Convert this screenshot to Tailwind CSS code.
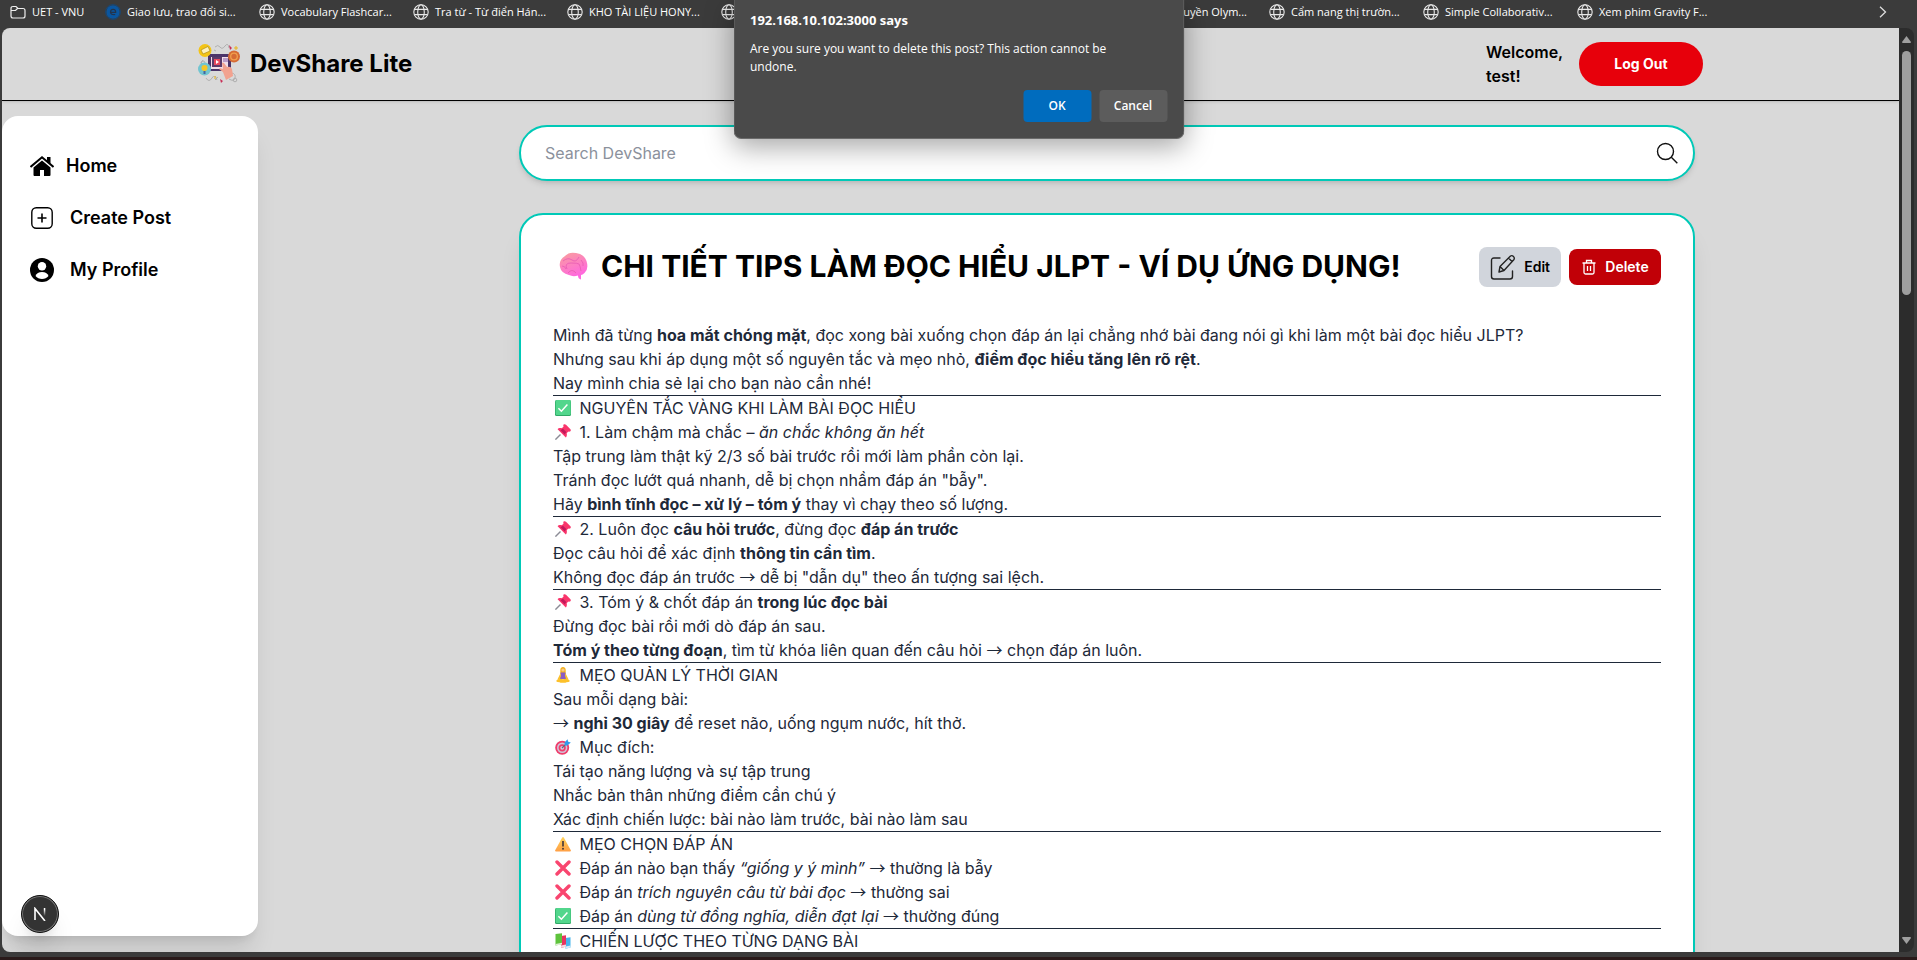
<!DOCTYPE html>
<html lang="vi">
<head>
<meta charset="utf-8">
<title>DevShare Lite</title>
<script src="https://cdn.jsdelivr.net/npm/@tailwindcss/browser@4"></script>
</head>
<body class="h-screen overflow-hidden bg-[#3b3b3b] font-['Inter',sans-serif] text-black">
<svg class="absolute size-0" aria-hidden="true">
  <defs>
    <linearGradient id="brainFill" x1="0" y1="0" x2="0.4" y2="1"><stop offset="0" stop-color="#f9a09c"/><stop offset="1" stop-color="#ff66e0"/></linearGradient>
    <linearGradient id="warnFill" x1="0" y1="0" x2="0" y2="1"><stop offset="0" stop-color="#ffd35c"/><stop offset="1" stop-color="#ff9f45"/></linearGradient>
    <linearGradient id="nFade" x1="0" y1="0" x2="0" y2="1"><stop offset="0.2" stop-color="#fff"/><stop offset="1" stop-color="#fff" stop-opacity="0"/></linearGradient>
    <symbol id="globe" viewBox="0 0 16 16"><g fill="none" stroke="#e8e8e8" stroke-width="1.1"><circle cx="8" cy="8" r="7.2"/><ellipse cx="8" cy="8" rx="3.3" ry="7.2"/><path d="M1.6 5.4h12.8M1.6 10.6h12.8"/></g></symbol>
    <symbol id="check" viewBox="0 0 16 16"><rect width="16" height="16" rx="1.5" fill="#2fa866"/><rect width="15" height="15" x="0.7" rx="1.2" fill="#52d68c"/><path d="M3.4 8.2l3 3 6-6.6" fill="none" stroke="#fff" stroke-width="1.5"/></symbol>
    <symbol id="pin" viewBox="0 0 16 16"><path d="M5.5 10.5L.4 15.6" stroke="#8b8b95" stroke-width="1.4"/><path d="M8.6.6c.8-.8 1.7-.4 2.4.2l4.2 4.2c.6.6.9 1.6.2 2.3-.6.5-1.5.5-2.1.2L11.700 9.2c.4 1.600.2 3.200-.9 4.200L2.600 5.200c1-1.100 2.700-1.300 4.200-.9L8.600 2.600C8.200 1.900 8.200 1.100 8.600.6z" fill="#f9356b"/><path d="M8 4.700L11.300 8l-1.600 2.600L5.400 6.300z" fill="#c2185b"/></symbol>
    <symbol id="cross" viewBox="0 0 16 16"><path d="M2 2l12 12M14 2L2 14" stroke="#f9456f" stroke-width="3.400" stroke-linecap="round"/></symbol>
    <symbol id="warn" viewBox="0 0 16 16"><path d="M7.200 1.500q.8-1.200 1.600 0l7 12.700q.5 1.300-.9 1.300H1.100q-1.400 0-.9-1.300z" fill="url(#warnFill)"/><path d="M8 5v5.500" stroke="#4a3b3b" stroke-width="1.700"/><circle cx="8" cy="12.700" r="1" fill="#4a3b3b"/></symbol>
    <symbol id="yoga" viewBox="0 0 16 16"><path d="M8 0c1.800 0 2.700 1.400 2.700 3v4H5.300V3C5.300 1.400 6.200 0 8 0z" fill="#f2b01e"/><circle cx="8" cy="3" r="1.600" fill="#f7c98b"/><path d="M5.600 5.500h4.800l1 6.500H4.600z" fill="#8a5cc4"/><path d="M5.600 6L2.400 12.500l2 .6L6 9zM10.400 6l3.200 6.500-2 .6L10 9z" fill="#fbc02d"/><path d="M1.500 13.200q3-2.500 6.500-1 3.500-1.500 6.500 1 .7 1.600-1 1.800-2.500.3-3 .8h-5q-.5-.5-3-.8-1.700-.2-1-1.800z" fill="#fdc12a"/></symbol>
    <symbol id="target" viewBox="0 0 16 16"><circle cx="7.200" cy="8.800" r="7" fill="#ef3d6b"/><circle cx="7.200" cy="8.800" r="5.200" fill="#cfc5d8"/><circle cx="7.200" cy="8.800" r="3.600" fill="#ef3d6b"/><circle cx="7.200" cy="8.800" r="1.900" fill="#d7cce0"/><path d="M7 9l5-5" stroke="#5a6a80" stroke-width="1.200"/><path d="M9.600 3.600L12.500.2l.7 2.500 2.600.7-3.400 3.100-2.500.1z" fill="#2f9bea"/></symbol>
    <symbol id="books" viewBox="0 0 16 16"><path d="M10.500 5l5-.8v10.300l-5 1.200z" fill="#46b6ec"/><path d="M10.500 13.500l5-1v2l-5 1.200z" fill="#d8ecf8"/><path d="M6 3l5-.8v11.500l-5 1z" fill="#e8345f"/><path d="M6 12.500l5-1v2.200l-5 1z" fill="#f3dbe2"/><path d="M.5 1l6.500-.8v11L.5 12.500z" fill="#5ec33c"/><path d="M.5 11l6.500-1.200v1.700l-6.500 1z" fill="#dff0d4"/></symbol>
  </defs>
</svg>

<div class="relative flex h-full flex-col">
  <!-- Bookmarks bar -->
  <nav class="flex h-7 shrink-0 items-center overflow-hidden pb-1 pl-[9px] pr-7 font-['Open_Sans',sans-serif] text-[11px] text-white whitespace-nowrap" aria-label="Bookmarks">
    <a href="#" class="flex w-24 shrink-0 items-center gap-1.5 pl-px"><svg class="size-4" viewBox="0 0 16 16" fill="none" stroke="#eee" stroke-width="1.200"><path d="M1 4.500q0-2 2-2h3l2 2h5q2 0 2 2v5.500q0 2-2 2H3q-2 0-2-2zM1 6.500h4.500l2-2"/></svg>UET - VNU</a>
    <a href="#" class="flex w-[154px] shrink-0 items-center gap-1.5"><svg class="size-4" viewBox="0 0 16 16"><circle cx="8" cy="8" r="6.700" fill="#0a56a0"/><circle cx="8" cy="8" r="7.400" fill="none" stroke="#0a4c8c" stroke-width=".7"/><path d="M5.500 8.300h5.200q0-3-2.600-3T5.500 8.300q.2 2.700 4.700 2.200" fill="none" stroke="#23344c" stroke-width="1.200"/></svg>Giao lưu, trao đổi si...</a>
    <a href="#" class="flex w-[154px] shrink-0 items-center gap-1.5"><svg class="size-4"><use href="#globe"/></svg>Vocabulary Flashcar...</a>
    <a href="#" class="flex w-[154px] shrink-0 items-center gap-1.5"><svg class="size-4"><use href="#globe"/></svg>Tra từ - Từ điển Hán...</a>
    <a href="#" class="flex w-[154px] shrink-0 items-center gap-1.5"><svg class="size-4"><use href="#globe"/></svg>KHO TÀI LIỆU HONY...</a>
    <a href="#" class="flex w-[394px] shrink-0 items-center"><svg class="size-4"><use href="#globe"/></svg></a>
    <a href="#" class="flex w-[154px] shrink-0 items-center justify-end gap-1.5 pr-[22px]"><svg class="size-4"><use href="#globe"/></svg>Truyền Olym...</a>
    <a href="#" class="flex w-[154px] shrink-0 items-center gap-1.5"><svg class="size-4"><use href="#globe"/></svg>Cẩm nang thị trườn...</a>
    <a href="#" class="flex w-[154px] shrink-0 items-center gap-1.5"><svg class="size-4"><use href="#globe"/></svg>Simple Collaborativ...</a>
    <a href="#" class="flex w-[154px] shrink-0 items-center gap-1.5"><svg class="size-4"><use href="#globe"/></svg>Xem phim Gravity F...</a>
    <button class="ml-auto" aria-label="More bookmarks"><svg class="h-3 w-3" viewBox="0 0 12 12" fill="none" stroke="#ddd" stroke-width="1.300"><path d="M3 .8L8.500 6 3 11.200"/></svg></button>
  </nav>

  <div class="flex min-h-0 flex-1 pl-0.5 pr-[3px]">
    <div class="flex min-w-0 flex-1 flex-col overflow-hidden rounded-l-lg bg-[#d9d9d9]">
      <header class="flex h-[73px] shrink-0 items-center justify-between border-b border-black pl-[196px] pr-[196px] shadow-sm">
        <a href="#" class="flex items-center gap-2.5">
          <svg class="size-[42px]" viewBox="0 0 42 42">
            <g fill="none" stroke="#aaa" stroke-width=".9"><path d="M17 4q3-3 5 0t5-1 4 2M8 35q3 5 6 0t5 2M34 30q4 1 3 5t-6 1M5 17l-2 3 3 2M17 37l3-3M16 7l2 1"/><circle cx="5" cy="20" r="2"/><circle cx="37" cy="37" r="1.800"/></g>
            <rect x="10" y="11" width="23" height="17" rx="2" fill="#4b3469"/><rect x="13" y="14" width="17" height="12" fill="#f1dfe9"/><rect x="14" y="14" width="10" height="10" fill="#5b3a68"/><rect x="16" y="16" width="6" height="6" fill="#e6475d"/><path d="M18 17l3 2-3 2z" fill="#fff"/><path d="M25 16h5M25 18h5" stroke="#8259a6"/>
            <path d="M16 28h8l2 5H14z" fill="#dadada"/>
            <circle cx="7" cy="7.500" r="6.500" fill="#f3c416"/><path d="M3 7l7-3.500 2 4.500-7 3z" fill="#fff3bd" stroke="#9f7e12" stroke-width=".6"/>
            <circle cx="36" cy="13.500" r="6" fill="#d66b35"/><circle cx="36" cy="13.500" r="3.300" fill="none" stroke="#f0a04e" stroke-width="1.300"/>
            <circle cx="6.500" cy="26" r="6.500" fill="#72c5d0"/><circle cx="6.500" cy="25" r="3" fill="#f5c526"/><path d="M6.500 28v3" stroke="#4466a0" stroke-width="2"/>
            <path d="M24 20q1-1 2 0l3 4q4-1 5 2l1 7-7 4-3-8-4-3 1-1 3 1z" fill="#f2a28f"/>
            <path d="M31 2l3 3-2 2zM22 36l3 2-2 2z" fill="#c92d55"/><path d="M38 3v4M36 5h4M17 33v3" stroke="#e9b51b"/>
          </svg>
          <span class="text-2xl font-bold">DevShare Lite</span>
        </a>
        <div class="flex items-center gap-4">
          <p class="w-[77px] font-semibold leading-6">Welcome, test!</p>
          <button class="h-11 w-[124px] rounded-full bg-[#e7000b] text-sm font-bold text-white">Log Out</button>
        </div>
      </header>

      <div class="flex min-h-0 flex-1">
        <div class="flex w-64 shrink-0 flex-col pb-4 pt-[15px]">
          <aside class="flex flex-1 flex-col rounded-2xl bg-white px-7 pt-6 text-lg font-semibold shadow-xl">
            <a href="#" class="flex h-[52px] items-center gap-3"><svg class="size-6" viewBox="0 0 24 24"><path d="M17 3h3.500v7L17 7z"/><path d="M.5 13L12 3.300 23.500 13" fill="none" stroke="#000" stroke-width="2"/><path d="M3.500 13.500L12 6.500l8.500 7V21q0 1-1 1H14v-6h-4v6H4.500q-1 0-1-1z"/></svg>Home</a>
            <a href="#" class="flex h-[52px] items-center gap-4"><svg class="size-6" viewBox="0 0 24 24" fill="none" stroke="#000" stroke-width="1.400"><rect x="1.800" y="1.800" width="20.400" height="20.400" rx="4.500"/><path d="M12 7.500v9M7.500 12h9" stroke-width="1.600"/></svg>Create Post</a>
            <a href="#" class="flex h-[52px] items-center gap-4"><svg class="size-6" viewBox="0 0 24 24"><circle cx="12" cy="12" r="12"/><circle cx="12" cy="8.200" r="4.200" fill="#fff"/><path d="M5.500 18q1.500-4 6.500-4t6.500 4q-2.500 3-6.500 3t-6.500-3z" fill="#fff"/></svg>My Profile</a>
            <button class="mb-[3px] mt-auto flex size-[38px] -ml-[9px] items-center justify-center rounded-full border border-[#111] bg-[#333] shadow-xl ring-1 ring-[#777] ring-inset" aria-label="Open developer tools"><svg class="h-3.5 w-3.5" viewBox="0 0 14 14" fill="none" stroke-width="1.600"><path d="M2 13V1.500L12 14" stroke="#fff"/><path d="M10.800 1h1.500v8h-1.500z" fill="url(#nFade)"/></svg></button>
          </aside>
        </div>

        <main class="flex min-w-0 flex-1 flex-col gap-8 pl-[261px] pr-[204px] pt-6">
          <form class="flex h-14 shrink-0 items-center rounded-[28px] border-2 border-[#00c9b7] bg-white pl-6 pr-3.5 shadow-md">
            <input type="text" aria-label="Search DevShare" placeholder="Search DevShare" class="h-10 min-w-0 flex-1 text-base outline-none placeholder:text-[#8b919c]">
            <button type="button" aria-label="Search"><svg class="size-6" viewBox="0 0 24 24" fill="none" stroke="#111" stroke-width="1.400"><circle cx="10.500" cy="10.500" r="8"/><path d="M16.300 16.300l6 6"/></svg></button>
          </form>

          <article class="shrink-0 rounded-3xl border-2 border-[#00c9b7] bg-white p-8 shadow-xl">
            <div class="mb-9 flex h-10 items-center justify-between">
              <h1 class="flex items-center pb-0.5 text-3xl font-bold">
                <svg class="ml-1.5 mr-[13px] h-7 w-[29px]" viewBox="0 0 29 28"><path d="M6 4Q10-.5 17 1q8 1 10.500 8 2.500 8-2 12-2 2-3.500 2v4.500q-3-.5-3-4-5 1.500-9-.5Q2 21 1 15-.5 8 6 4z" fill="url(#brainFill)"/><path d="M4 9q5-4 9-1t7-3M8 17q-3-6 4-6t8 1 2 7M9 21q4-5 8 0M22 8q3 3 2 6M3 14q3 0 4 3" fill="none" stroke="#ea5fb4" stroke-width=".9"/></svg>
                CHI TIẾT TIPS LÀM ĐỌC HIỂU JLPT - VÍ DỤ ỨNG DỤNG!
              </h1>
              <div class="flex items-center gap-2 text-sm font-semibold">
                <button class="flex h-10 items-center gap-2 rounded-lg bg-[#d1d5dc] px-[11px]"><svg class="size-[26px]" viewBox="0 0 26 26" fill="none" stroke="#222" stroke-width="1.400" stroke-linejoin="round"><path d="M10 4H4Q1.500 4 1.500 6.500v16Q1.500 25 4 25h16q2.500 0 2.500-2.500V17" stroke-linecap="round"/><path d="M9 18l1-5.500L20.500 2q1.500-1 3 .5t.5 3L14 16.500zM18.500 4l3.500 3.500M10 12.500l4 4"/></svg>Edit</button>
                <button class="flex h-9 w-[92px] items-center justify-center gap-2 rounded-lg bg-[#c10007] text-white"><svg class="size-4" viewBox="0 0 16 16" fill="none" stroke="#fff" stroke-width="1.300"><path d="M1.500 4h13M5.500 4V1.500h5V4M3 4v9.500q0 1.500 1.500 1.500h7q1.500 0 1.500-1.500V4M6.500 7v5M9.500 7v5"/></svg>Delete</button>
              </div>
            </div>
            <div class="leading-6 text-[#1e2939] [&_svg]:ml-0.5 [&_svg]:mr-1 [&_svg]:inline-block [&_svg]:size-4 [&_svg]:align-[-2px] [&_hr]:border-[#1e2939] [&_i]:font-['Noto_Sans_CJK_JP',sans-serif] [&_i]:not-italic [&_i]:leading-none">
              <p>Mình đã từng <strong>hoa mắt chóng mặt</strong>, đọc xong bài xuống chọn đáp án lại chẳng nhớ bài đang nói gì khi làm một bài đọc hiểu JLPT?</p>
              <p>Nhưng sau khi áp dụng một số nguyên tắc và mẹo nhỏ, <strong>điểm đọc hiểu tăng lên rõ rệt</strong>.</p>
              <p>Nay mình chia sẻ lại cho bạn nào cần nhé!</p>
              <hr>
              <p><svg><use href="#check"/></svg> NGUYÊN TẮC VÀNG KHI LÀM BÀI ĐỌC HIỂU</p>
              <p><svg><use href="#pin"/></svg> 1. Làm chậm mà chắc – <em>ăn chắc không ăn hết</em></p>
              <p>Tập trung làm thật kỹ 2/3 số bài trước rồi mới làm phần còn lại.</p>
              <p>Tránh đọc lướt quá nhanh, dễ bị chọn nhầm đáp án "bẫy".</p>
              <p>Hãy <strong>bình tĩnh đọc – xử lý – tóm ý</strong> thay vì chạy theo số lượng.</p>
              <hr>
              <p><svg><use href="#pin"/></svg> 2. Luôn đọc <strong>câu hỏi trước</strong>, đừng đọc <strong>đáp án trước</strong></p>
              <p>Đọc câu hỏi để xác định <strong>thông tin cần tìm</strong>.</p>
              <p>Không đọc đáp án trước <i>→</i> dễ bị "dẫn dụ" theo ấn tượng sai lệch.</p>
              <hr>
              <p><svg><use href="#pin"/></svg> 3. Tóm ý &amp; chốt đáp án <strong>trong lúc đọc bài</strong></p>
              <p>Đừng đọc bài rồi mới dò đáp án sau.</p>
              <p><strong>Tóm ý theo từng đoạn</strong>, tìm từ khóa liên quan đến câu hỏi <i>→</i> chọn đáp án luôn.</p>
              <hr>
              <p><svg><use href="#yoga"/></svg> MẸO QUẢN LÝ THỜI GIAN</p>
              <p>Sau mỗi dạng bài:</p>
              <p><i>→</i> <strong>nghỉ 30 giây</strong> để reset não, uống ngụm nước, hít thở.</p>
              <p><svg><use href="#target"/></svg> Mục đích:</p>
              <p>Tái tạo năng lượng và sự tập trung</p>
              <p>Nhắc bản thân những điểm cần chú ý</p>
              <p>Xác định chiến lược: bài nào làm trước, bài nào làm sau</p>
              <hr>
              <p><svg><use href="#warn"/></svg> MẸO CHỌN ĐÁP ÁN</p>
              <p><svg><use href="#cross"/></svg> Đáp án nào bạn thấy <em>“giống y ý mình”</em> <i>→</i> thường là bẫy</p>
              <p><svg><use href="#cross"/></svg> Đáp án <em>trích nguyên câu từ bài đọc</em> <i>→</i> thường sai</p>
              <p><svg><use href="#check"/></svg> Đáp án <em>dùng từ đồng nghĩa, diễn đạt lại</em> <i>→</i> thường đúng</p>
              <hr>
              <p><svg><use href="#books"/></svg> CHIẾN LƯỢC THEO TỪNG DẠNG BÀI</p>
            </div>
          </article>
        </main>
      </div>
    </div>

    <!-- Scrollbar -->
    <div class="flex w-[15px] shrink-0 flex-col items-center rounded-r-lg bg-[#2c2c2c] py-2" aria-hidden="true">
      <svg class="h-[7px] w-[9px]" viewBox="0 0 9 7"><path d="M4.500 0L9 6q0 1-1 1H1Q0 7 0 6z" fill="#9f9f9f"/></svg>
      <div class="mt-2 h-[244px] w-[9px] rounded-full bg-[#9f9f9f]"></div>
      <svg class="mt-auto h-[7px] w-[9px]" viewBox="0 0 9 7"><path d="M4.500 7L9 1q0-1-1-1H1Q0 0 0 1z" fill="#9f9f9f"/></svg>
    </div>
  </div>
  <div class="h-2 shrink-0 border-b-[3px] border-[#2a1a1a]"></div>

  <!-- Confirmation dialog -->
  <div role="dialog" aria-labelledby="dlg-title" class="absolute left-1/2 top-0 flex h-[139px] w-[451px] -translate-x-1/2 flex-col rounded-b-lg border border-t-0 border-[#6b6b6b] bg-[#4a4a4a] px-4 pt-[11px] font-['Open_Sans',sans-serif] text-xs leading-[18px] text-white shadow-[0_8px_28px_rgba(0,0,0,0.35)]">
    <h2 id="dlg-title" class="text-[13px] font-bold">192.168.10.102:3000 says</h2>
    <p class="mt-[11px] pr-10">Are you sure you want to delete this post? This action cannot be undone.</p>
    <div class="mt-3.5 flex justify-end gap-2 font-semibold">
      <button class="h-8 w-[68px] rounded bg-[#006cbe]">OK</button>
      <button class="h-8 w-[68px] rounded bg-[#5c5c5c]">Cancel</button>
    </div>
  </div>
</div>
</body>
</html>
